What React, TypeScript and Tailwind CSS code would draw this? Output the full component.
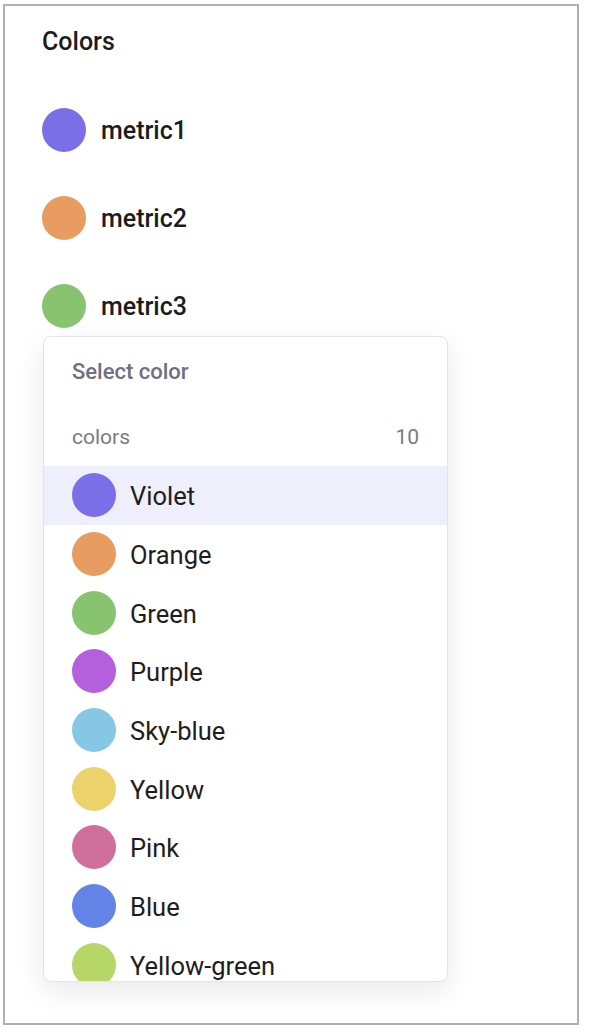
import React from "react";

// Series shown in the chart legend
const metrics = [
  { name: "metric1", color: "#7b6fe8" },
  { name: "metric2", color: "#e89c62" },
  { name: "metric3", color: "#88c46f" },
];

// Palette options in the dropdown
const palette = [
  { name: "Violet", color: "#7b6fe8" },
  { name: "Orange", color: "#e89c62" },
  { name: "Green", color: "#88c46f" },
  { name: "Purple", color: "#b45fdc" },
  { name: "Sky-blue", color: "#86c7e3" },
  { name: "Yellow", color: "#ebd26b" },
  { name: "Pink", color: "#d06f9c" },
  { name: "Blue", color: "#6383e6" },
  { name: "Yellow-green", color: "#b7d668" },
  { name: "Teal", color: "#5fc3b4" },
];

export default function App() {
  const selected = "Violet";

  return (
    <div
      className="w-[590px] h-[1034px] bg-white pl-[3px] pt-[4px]"
      style={{ fontFamily: "Roboto, 'Noto Sans', sans-serif" }}
    >
      <div className="w-[576px] h-[1021px] border-2 border-[#b0b0b0] pl-[37px] pt-[22px]">
        {/* Title */}
        <div className="text-[25px] leading-[28px] font-medium text-[#1c1c1e]">Colors</div>

        {/* Legend rows */}
        <div className="mt-[52px] flex flex-col gap-[44px]">
          {metrics.map((m) => (
            <div key={m.name} className="flex items-center gap-[15px] h-[44px]">
              <span
                className="w-[44px] h-[44px] rounded-full shrink-0"
                style={{ backgroundColor: m.color }}
              />
              <span className="text-[25px] leading-[30px] pt-[2px] font-medium text-[#1c1c1e]">
                {m.name}
              </span>
            </div>
          ))}
        </div>

        {/* Dropdown */}
        <div className="mt-[8px] ml-[1px] w-[405px] h-[646px] bg-white border border-[#e3e3eb] rounded-[8px] shadow-[0_10px_28px_rgba(20,20,40,0.09)] overflow-hidden">
          <div className="px-[28px] pt-[23px]">
            <div className="text-[22px] leading-[24px] font-medium text-[#707080]">Select color</div>
            <div className="mt-[41px] flex justify-between text-[21px] leading-[24px] text-[#7a7a84]">
              <span>colors</span>
              <span>10</span>
            </div>
          </div>

          <div className="mt-[17px] flex flex-col">
            {palette.map((p) => (
              <div
                key={p.name}
                className={
                  "flex items-center gap-[14px] h-[58.7px] shrink-0 px-[28px] " +
                  (p.name === selected ? "bg-[#efeefb]" : "")
                }
              >
                <span
                  className="w-[44px] h-[44px] rounded-full shrink-0"
                  style={{ backgroundColor: p.color }}
                />
                <span className="text-[25.5px] leading-[30px] pt-[2px] text-[#1e1e20]">{p.name}</span>
              </div>
            ))}
          </div>
        </div>
      </div>
    </div>
  );
}
